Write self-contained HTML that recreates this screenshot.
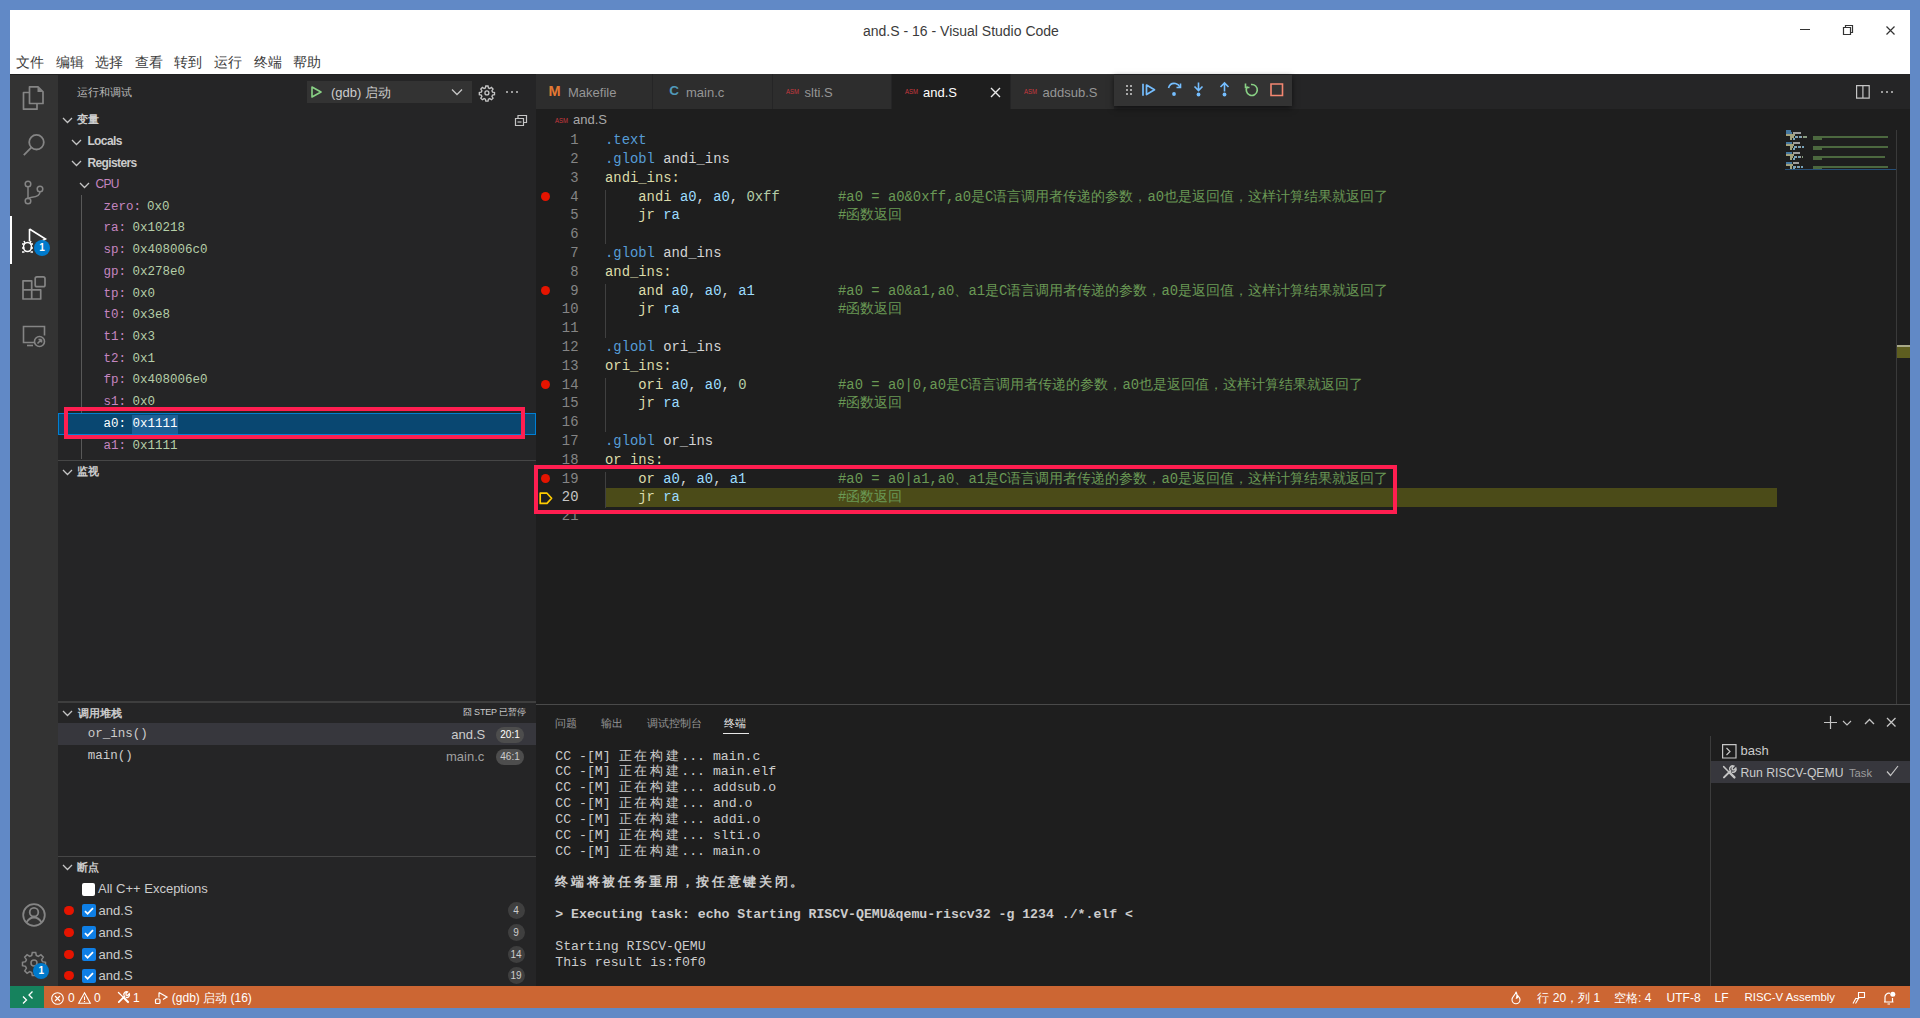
<!DOCTYPE html>
<html><head><meta charset="utf-8">
<style>
*{margin:0;padding:0;box-sizing:border-box}
html,body{width:1920px;height:1018px;overflow:hidden;background:#6189c6;font-family:"Liberation Sans",sans-serif}
.a{position:absolute;white-space:pre}
svg{position:absolute;overflow:visible}
</style></head><body>

<div class="a" style="left:10px;top:10px;width:1900px;height:64px;background:#ffffff;"></div>
<div class="a" style="left:10px;top:74px;width:48px;height:912px;background:#333333;"></div>
<div class="a" style="left:58px;top:74px;width:478px;height:912px;background:#252526;"></div>
<div class="a" style="left:536px;top:74px;width:1374px;height:912px;background:#1e1e1e;"></div>
<div class="a" style="left:10px;top:986px;width:1900px;height:22px;background:#cc6633;"></div>
<div class="a" style="left:10px;top:986px;width:34px;height:22px;background:#16825d;"></div>
<div class="a" style="left:10px;top:74px;width:1900px;height:1px;background:#202020;"></div>
<div class="a" style="left:863.00px;top:23.65px;font-size:14px;line-height:14px;color:#3b3b3b;font-family:'Liberation Sans',sans-serif;">and.S - 16 - Visual Studio Code</div>
<div class="a" style="left:1800px;top:28.7px;width:10px;height:1.3px;background:#333;"></div>
<svg style="left:1842px;top:24px;" width="12" height="12" viewBox="0 0 12 12"><path d="M1.5 3.5h7v7h-7z M3.5 3.5v-2h7v7h-2" fill="none" stroke="#333" stroke-width="1.2"/></svg>
<svg style="left:1886px;top:25.5px;" width="9" height="9" viewBox="0 0 9 9"><path d="M0.5 0.5L8.5 8.5M8.5 0.5L0.5 8.5" stroke="#333" stroke-width="1.2"/></svg>
<div class="a" style="left:16.00px;top:55.87px;font-size:13.5px;line-height:13.5px;color:#3c3c3c;font-family:'Liberation Sans',sans-serif;">文件</div>
<div class="a" style="left:55.60px;top:55.87px;font-size:13.5px;line-height:13.5px;color:#3c3c3c;font-family:'Liberation Sans',sans-serif;">编辑</div>
<div class="a" style="left:95.20px;top:55.87px;font-size:13.5px;line-height:13.5px;color:#3c3c3c;font-family:'Liberation Sans',sans-serif;">选择</div>
<div class="a" style="left:134.80px;top:55.87px;font-size:13.5px;line-height:13.5px;color:#3c3c3c;font-family:'Liberation Sans',sans-serif;">查看</div>
<div class="a" style="left:174.40px;top:55.87px;font-size:13.5px;line-height:13.5px;color:#3c3c3c;font-family:'Liberation Sans',sans-serif;">转到</div>
<div class="a" style="left:214.00px;top:55.87px;font-size:13.5px;line-height:13.5px;color:#3c3c3c;font-family:'Liberation Sans',sans-serif;">运行</div>
<div class="a" style="left:253.60px;top:55.87px;font-size:13.5px;line-height:13.5px;color:#3c3c3c;font-family:'Liberation Sans',sans-serif;">终端</div>
<div class="a" style="left:293.20px;top:55.87px;font-size:13.5px;line-height:13.5px;color:#3c3c3c;font-family:'Liberation Sans',sans-serif;">帮助</div>
<div class="a" style="left:10px;top:216px;width:2px;height:48px;background:#ffffff;"></div>
<svg style="left:22px;top:86px;" width="24" height="24" viewBox="0 0 24 24"><g fill="none" stroke="#858585" stroke-width="1.7" stroke-linejoin="round"><path d="M7.5 0.8h8.5l5 5v11.7h-13.5z"/><path d="M7.5 6.5h-6v16.7h13.5v-5.7"/></g><path d="M15.5 1v5h5z" fill="#858585"/></svg>
<svg style="left:22px;top:133px;" width="24" height="24" viewBox="0 0 24 24"><g fill="none" stroke="#858585" stroke-width="1.8"><circle cx="14.5" cy="9.2" r="7.3"/><path d="M9.2 14.6L1.8 22.2"/></g></svg>
<svg style="left:22px;top:180px;" width="24" height="26" viewBox="0 0 24 26"><g fill="none" stroke="#858585" stroke-width="1.5"><circle cx="6" cy="4" r="2.8"/><circle cx="6" cy="21" r="2.8"/><circle cx="18" cy="9" r="2.8"/><path d="M6 6.8v11.4"/><path d="M18 11.8c0 4-3 5-8 5.5c-2 .3-4 1-4 2"/></g></svg>
<svg style="left:20px;top:227px;" width="28" height="28" viewBox="0 0 28 28"><g fill="none" stroke="#ffffff" stroke-width="1.6"><path d="M9.5 2v12.5M9.5 2l16 10l-6 3.5"/></g><g fill="none" stroke="#ffffff" stroke-width="1.5"><ellipse cx="7.5" cy="20" rx="4" ry="4.5"/><path d="M2 17h2.5M2 21h2.5M2 25h2.5M10.5 17h2.5M10.5 21h2.5M10.5 25h2.5M5 16l-1-2M10 16l1-2"/></g></svg>
<div class="a" style="left:34px;top:239.6px;width:16px;height:16px;border-radius:8px;background:#007acc;color:#fff;font-size:10px;line-height:16px;text-align:center;font-weight:bold">1</div>
<svg style="left:22px;top:276px;" width="24" height="24" viewBox="0 0 24 24"><g fill="none" stroke="#858585" stroke-width="1.7" stroke-linejoin="round"><path d="M1 4.8h8.7v9h9v9.2h-17.7z"/><path d="M1 13.8h8.7v9.2"/><rect x="13.2" y="0.9" width="9.8" height="9.8" rx="1.8"/></g></svg>
<svg style="left:22px;top:324px;" width="24" height="24" viewBox="0 0 24 24"><g fill="none" stroke="#858585" stroke-width="1.6"><path d="M13 18.5h-11.5v-16h21v9"/><path d="M5 21.5h6"/><circle cx="17.5" cy="17.5" r="5"/><path d="M15.5 19.5l4-4M19.5 15.5v3M19.5 15.5h-3"/></g></svg>
<svg style="left:22px;top:903px;" width="24" height="24" viewBox="0 0 24 24"><g fill="none" stroke="#858585" stroke-width="1.8"><circle cx="12" cy="12" r="10.8"/><circle cx="12" cy="9.2" r="4.3"/><path d="M4.5 19.5c2-3.5 4.5-5 7.5-5s5.5 1.5 7.5 5"/></g></svg>
<svg style="left:22px;top:951px;" width="24" height="24" viewBox="0 0 24 24"><g fill="none" stroke="#858585" stroke-width="1.5"><path d="M10.3 1.5h3.4l.6 3 2 .9 2.6-1.7 2.4 2.4-1.7 2.6.9 2 3 .6v3.4l-3 .6-.9 2 1.7 2.6-2.4 2.4-2.6-1.7-2 .9-.6 3h-3.4l-.6-3-2-.9-2.6 1.7-2.4-2.4 1.7-2.6-.9-2-3-.6v-3.4l3-.6.9-2-1.7-2.6 2.4-2.4 2.6 1.7 2-.9z"/><circle cx="12" cy="12" r="3"/></g></svg>
<div class="a" style="left:33.3px;top:962.7px;width:16px;height:16px;border-radius:8px;background:#007acc;color:#fff;font-size:10px;line-height:16px;text-align:center;font-weight:bold">1</div>
<div class="a" style="left:77.40px;top:86.69px;font-size:11px;line-height:11px;color:#bbbbbb;font-family:'Liberation Sans',sans-serif;">运行和调试</div>
<div class="a" style="left:307px;top:81px;width:165px;height:22px;background:#333333;"></div>
<svg style="left:311px;top:86px;" width="11" height="12" viewBox="0 0 11 12"><path d="M1 1L10 6L1 11Z" fill="none" stroke="#89d185" stroke-width="1.6" stroke-linejoin="round"/></svg>
<div class="a" style="left:331.00px;top:85.80px;font-size:13px;line-height:13px;color:#cccccc;font-family:'Liberation Sans',sans-serif;">(gdb) 启动</div>
<svg style="left:451px;top:88px;" width="12" height="8" viewBox="0 0 12 8"><path d="M1 1.5l5 5 5-5" fill="none" stroke="#c5c5c5" stroke-width="1.3"/></svg>
<svg style="left:479px;top:84.5px;" width="16" height="16" viewBox="0 0 16 16"><g transform="scale(0.66)"><g fill="none" stroke="#c5c5c5" stroke-width="2"><path d="M10.3 1.5h3.4l.6 3 2 .9 2.6-1.7 2.4 2.4-1.7 2.6.9 2 3 .6v3.4l-3 .6-.9 2 1.7 2.6-2.4 2.4-2.6-1.7-2 .9-.6 3h-3.4l-.6-3-2-.9-2.6 1.7-2.4-2.4 1.7-2.6-.9-2-3-.6v-3.4l3-.6.9-2-1.7-2.6 2.4-2.4 2.6 1.7 2-.9z"/><circle cx="12" cy="12" r="3"/></g></g></svg>
<div class="a" style="left:506px;top:90.8px;width:2.2px;height:2.2px;background:#c5c5c5;border-radius:1px;"></div>
<div class="a" style="left:511px;top:90.8px;width:2.2px;height:2.2px;background:#c5c5c5;border-radius:1px;"></div>
<div class="a" style="left:516px;top:90.8px;width:2.2px;height:2.2px;background:#c5c5c5;border-radius:1px;"></div>
<svg style="left:62px;top:116.5px;" width="11" height="7" viewBox="0 0 11 7"><path d="M1 1l4.5 4.5L10 1" fill="none" stroke="#c5c5c5" stroke-width="1.3"/></svg>
<div class="a" style="left:77.40px;top:113.99px;font-size:11px;line-height:11px;color:#cccccc;font-family:'Liberation Sans',sans-serif;font-weight:bold;">变量</div>
<svg style="left:514px;top:113px;" width="15" height="14" viewBox="0 0 15 14"><g fill="none" stroke="#c5c5c5" stroke-width="1.2"><path d="M1.5 5.5h8v7h-8z M4 5.5v-3h8.5v7h-3"/><path d="M3.5 9h4"/></g></svg>
<svg style="left:71px;top:138.5px;" width="11" height="7" viewBox="0 0 11 7"><path d="M1 1l4.5 4.5L10 1" fill="none" stroke="#c5c5c5" stroke-width="1.3"/></svg>
<div class="a" style="left:87.40px;top:135.14px;font-size:12px;line-height:12px;color:#cccccc;font-family:'Liberation Sans',sans-serif;font-weight:bold;letter-spacing:-0.6px;">Locals</div>
<svg style="left:71px;top:160.2px;" width="11" height="7" viewBox="0 0 11 7"><path d="M1 1l4.5 4.5L10 1" fill="none" stroke="#c5c5c5" stroke-width="1.3"/></svg>
<div class="a" style="left:87.40px;top:156.84px;font-size:12px;line-height:12px;color:#cccccc;font-family:'Liberation Sans',sans-serif;font-weight:bold;letter-spacing:-0.6px;">Registers</div>
<svg style="left:78.5px;top:181.8px;" width="11" height="7" viewBox="0 0 11 7"><path d="M1 1l4.5 4.5L10 1" fill="none" stroke="#c5c5c5" stroke-width="1.3"/></svg>
<div class="a" style="left:95.50px;top:177.64px;font-size:12px;line-height:12px;color:#c586c0;font-family:'Liberation Sans',sans-serif;letter-spacing:-0.7px;">CPU</div>
<div class="a" style="left:81px;top:195px;width:1px;height:264px;background:#585858;"></div>
<div class="a" style="left:103.60px;top:200.62px;font-size:12.5px;line-height:12.5px;color:#c586c0;font-family:'Liberation Mono',monospace;">zero: </div>
<div class="a" style="left:146.92px;top:200.62px;font-size:12.5px;line-height:12.5px;color:#b5cea8;font-family:'Liberation Mono',monospace;">0x0</div>
<div class="a" style="left:103.60px;top:222.35px;font-size:12.5px;line-height:12.5px;color:#c586c0;font-family:'Liberation Mono',monospace;">ra: </div>
<div class="a" style="left:132.48px;top:222.35px;font-size:12.5px;line-height:12.5px;color:#b5cea8;font-family:'Liberation Mono',monospace;">0x10218</div>
<div class="a" style="left:103.60px;top:244.08px;font-size:12.5px;line-height:12.5px;color:#c586c0;font-family:'Liberation Mono',monospace;">sp: </div>
<div class="a" style="left:132.48px;top:244.08px;font-size:12.5px;line-height:12.5px;color:#b5cea8;font-family:'Liberation Mono',monospace;">0x408006c0</div>
<div class="a" style="left:103.60px;top:265.81px;font-size:12.5px;line-height:12.5px;color:#c586c0;font-family:'Liberation Mono',monospace;">gp: </div>
<div class="a" style="left:132.48px;top:265.81px;font-size:12.5px;line-height:12.5px;color:#b5cea8;font-family:'Liberation Mono',monospace;">0x278e0</div>
<div class="a" style="left:103.60px;top:287.54px;font-size:12.5px;line-height:12.5px;color:#c586c0;font-family:'Liberation Mono',monospace;">tp: </div>
<div class="a" style="left:132.48px;top:287.54px;font-size:12.5px;line-height:12.5px;color:#b5cea8;font-family:'Liberation Mono',monospace;">0x0</div>
<div class="a" style="left:103.60px;top:309.27px;font-size:12.5px;line-height:12.5px;color:#c586c0;font-family:'Liberation Mono',monospace;">t0: </div>
<div class="a" style="left:132.48px;top:309.27px;font-size:12.5px;line-height:12.5px;color:#b5cea8;font-family:'Liberation Mono',monospace;">0x3e8</div>
<div class="a" style="left:103.60px;top:331.00px;font-size:12.5px;line-height:12.5px;color:#c586c0;font-family:'Liberation Mono',monospace;">t1: </div>
<div class="a" style="left:132.48px;top:331.00px;font-size:12.5px;line-height:12.5px;color:#b5cea8;font-family:'Liberation Mono',monospace;">0x3</div>
<div class="a" style="left:103.60px;top:352.73px;font-size:12.5px;line-height:12.5px;color:#c586c0;font-family:'Liberation Mono',monospace;">t2: </div>
<div class="a" style="left:132.48px;top:352.73px;font-size:12.5px;line-height:12.5px;color:#b5cea8;font-family:'Liberation Mono',monospace;">0x1</div>
<div class="a" style="left:103.60px;top:374.46px;font-size:12.5px;line-height:12.5px;color:#c586c0;font-family:'Liberation Mono',monospace;">fp: </div>
<div class="a" style="left:132.48px;top:374.46px;font-size:12.5px;line-height:12.5px;color:#b5cea8;font-family:'Liberation Mono',monospace;">0x408006e0</div>
<div class="a" style="left:103.60px;top:396.19px;font-size:12.5px;line-height:12.5px;color:#c586c0;font-family:'Liberation Mono',monospace;">s1: </div>
<div class="a" style="left:132.48px;top:396.19px;font-size:12.5px;line-height:12.5px;color:#b5cea8;font-family:'Liberation Mono',monospace;">0x0</div>
<div class="a" style="left:58px;top:413px;width:478px;height:22px;background:#094771;border:1px solid #007fd4;"></div>
<div class="a" style="left:132px;top:414.5px;width:45.5px;height:19px;background:#1d5f94;"></div>
<div class="a" style="left:103.60px;top:417.92px;font-size:12.5px;line-height:12.5px;color:#ffffff;font-family:'Liberation Mono',monospace;">a0: </div>
<div class="a" style="left:132.50px;top:417.92px;font-size:12.5px;line-height:12.5px;color:#ffffff;font-family:'Liberation Mono',monospace;">0x1111</div>
<div class="a" style="left:103.60px;top:439.65px;font-size:12.5px;line-height:12.5px;color:#c586c0;font-family:'Liberation Mono',monospace;">a1: </div>
<div class="a" style="left:132.48px;top:439.65px;font-size:12.5px;line-height:12.5px;color:#b5cea8;font-family:'Liberation Mono',monospace;">0x1111</div>
<div class="a" style="left:58px;top:460px;width:478px;height:1px;background:#464646;"></div>
<svg style="left:62px;top:468.5px;" width="11" height="7" viewBox="0 0 11 7"><path d="M1 1l4.5 4.5L10 1" fill="none" stroke="#c5c5c5" stroke-width="1.3"/></svg>
<div class="a" style="left:77.40px;top:466.19px;font-size:11px;line-height:11px;color:#cccccc;font-family:'Liberation Sans',sans-serif;font-weight:bold;">监视</div>
<div class="a" style="left:58px;top:701px;width:478px;height:2px;background:#3e3e3e;"></div>
<svg style="left:62px;top:709.5px;" width="11" height="7" viewBox="0 0 11 7"><path d="M1 1l4.5 4.5L10 1" fill="none" stroke="#c5c5c5" stroke-width="1.3"/></svg>
<div class="a" style="left:77.80px;top:708.19px;font-size:11px;line-height:11px;color:#cccccc;font-family:'Liberation Sans',sans-serif;font-weight:bold;">调用堆栈</div>
<div class="a" style="left:463.00px;top:708.38px;font-size:9px;line-height:9px;color:#cccccc;font-family:'Liberation Sans',sans-serif;letter-spacing:-0.2px;">囧 STEP 已暂停</div>
<div class="a" style="left:58px;top:723px;width:478px;height:21.7px;background:#37373d;"></div>
<div class="a" style="left:87.70px;top:727.72px;font-size:12.5px;line-height:12.5px;color:#cccccc;font-family:'Liberation Mono',monospace;">or_ins()</div>
<div class="a" style="left:451.30px;top:727.80px;font-size:13px;line-height:13px;color:#cccccc;font-family:'Liberation Sans',sans-serif;">and.S</div>
<div class="a" style="left:496px;top:726.5px;width:28px;height:16px;border-radius:8px;background:#4d4d4d;color:#ffffff;font-size:10px;line-height:16px;text-align:center">20:1</div>
<div class="a" style="left:87.70px;top:749.52px;font-size:12.5px;line-height:12.5px;color:#cccccc;font-family:'Liberation Mono',monospace;">main()</div>
<div class="a" style="left:446.00px;top:749.50px;font-size:13px;line-height:13px;color:#a0a0a0;font-family:'Liberation Sans',sans-serif;">main.c</div>
<div class="a" style="left:496px;top:748.5px;width:28px;height:16px;border-radius:8px;background:#4d4d4d;color:#cccccc;font-size:10px;line-height:16px;text-align:center">46:1</div>
<div class="a" style="left:58px;top:856px;width:478px;height:1px;background:#464646;"></div>
<svg style="left:62px;top:864px;" width="11" height="7" viewBox="0 0 11 7"><path d="M1 1l4.5 4.5L10 1" fill="none" stroke="#c5c5c5" stroke-width="1.3"/></svg>
<div class="a" style="left:77.30px;top:862.19px;font-size:11px;line-height:11px;color:#cccccc;font-family:'Liberation Sans',sans-serif;font-weight:bold;">断点</div>
<div class="a" style="left:82px;top:883px;width:13px;height:12.5px;background:#ffffff;border-radius:2px;"></div>
<div class="a" style="left:98.00px;top:882.30px;font-size:13px;line-height:13px;color:#cccccc;font-family:'Liberation Sans',sans-serif;">All C++ Exceptions</div>
<div class="a" style="left:64.4px;top:905.9px;width:9.2px;height:9.2px;border-radius:5px;background:#e51400"></div>
<div class="a" style="left:82px;top:904.0px;width:13.5px;height:13.3px;background:#0e7fe6;border-radius:2px;"></div>
<svg style="left:82px;top:904.0px;" width="14" height="14" viewBox="0 0 14 14"><path d="M3 7.2l2.6 2.6L11 4.2" fill="none" stroke="#ffffff" stroke-width="1.8"/></svg>
<div class="a" style="left:98.60px;top:903.60px;font-size:13px;line-height:13px;color:#cccccc;font-family:'Liberation Sans',sans-serif;">and.S</div>
<div class="a" style="left:507.5px;top:902.0px;width:17px;height:17px;border-radius:9px;background:#3f3f3f;color:#cccccc;font-size:10px;line-height:17px;text-align:center">4</div>
<div class="a" style="left:64.4px;top:927.7px;width:9.2px;height:9.2px;border-radius:5px;background:#e51400"></div>
<div class="a" style="left:82px;top:925.8px;width:13.5px;height:13.3px;background:#0e7fe6;border-radius:2px;"></div>
<svg style="left:82px;top:925.8px;" width="14" height="14" viewBox="0 0 14 14"><path d="M3 7.2l2.6 2.6L11 4.2" fill="none" stroke="#ffffff" stroke-width="1.8"/></svg>
<div class="a" style="left:98.60px;top:925.70px;font-size:13px;line-height:13px;color:#cccccc;font-family:'Liberation Sans',sans-serif;">and.S</div>
<div class="a" style="left:507.5px;top:923.8px;width:17px;height:17px;border-radius:9px;background:#3f3f3f;color:#cccccc;font-size:10px;line-height:17px;text-align:center">9</div>
<div class="a" style="left:64.4px;top:949.6px;width:9.2px;height:9.2px;border-radius:5px;background:#e51400"></div>
<div class="a" style="left:82px;top:947.7px;width:13.5px;height:13.3px;background:#0e7fe6;border-radius:2px;"></div>
<svg style="left:82px;top:947.7px;" width="14" height="14" viewBox="0 0 14 14"><path d="M3 7.2l2.6 2.6L11 4.2" fill="none" stroke="#ffffff" stroke-width="1.8"/></svg>
<div class="a" style="left:98.60px;top:947.70px;font-size:13px;line-height:13px;color:#cccccc;font-family:'Liberation Sans',sans-serif;">and.S</div>
<div class="a" style="left:507.5px;top:945.7px;width:17px;height:17px;border-radius:9px;background:#3f3f3f;color:#cccccc;font-size:10px;line-height:17px;text-align:center">14</div>
<div class="a" style="left:64.4px;top:971.2px;width:9.2px;height:9.2px;border-radius:5px;background:#e51400"></div>
<div class="a" style="left:82px;top:969.3px;width:13.5px;height:13.3px;background:#0e7fe6;border-radius:2px;"></div>
<svg style="left:82px;top:969.3px;" width="14" height="14" viewBox="0 0 14 14"><path d="M3 7.2l2.6 2.6L11 4.2" fill="none" stroke="#ffffff" stroke-width="1.8"/></svg>
<div class="a" style="left:98.60px;top:969.00px;font-size:13px;line-height:13px;color:#cccccc;font-family:'Liberation Sans',sans-serif;">and.S</div>
<div class="a" style="left:507.5px;top:967.3px;width:17px;height:17px;border-radius:9px;background:#3f3f3f;color:#cccccc;font-size:10px;line-height:17px;text-align:center">19</div>
<div class="a" style="left:536px;top:74px;width:1374px;height:35px;background:#252526;"></div>
<div class="a" style="left:536px;top:74px;width:116px;height:35px;background:#2d2d2d;"></div>
<div class="a" style="left:653px;top:74px;width:119px;height:35px;background:#2d2d2d;"></div>
<div class="a" style="left:773px;top:74px;width:118px;height:35px;background:#2d2d2d;"></div>
<div class="a" style="left:892px;top:74px;width:118px;height:35px;background:#1e1e1e;"></div>
<div class="a" style="left:1011px;top:74px;width:103px;height:35px;background:#2d2d2d;"></div>
<div class="a" style="left:548.50px;top:83.73px;font-size:14.5px;line-height:14.5px;color:#e37933;font-family:'Liberation Sans',sans-serif;font-weight:bold;">M</div>
<div class="a" style="left:568.00px;top:85.50px;font-size:13px;line-height:13px;color:#969696;font-family:'Liberation Sans',sans-serif;">Makefile</div>
<div class="a" style="left:669.20px;top:83.77px;font-size:13.5px;line-height:13.5px;color:#519aba;font-family:'Liberation Sans',sans-serif;font-weight:bold;">C</div>
<div class="a" style="left:686.00px;top:85.50px;font-size:13px;line-height:13px;color:#969696;font-family:'Liberation Sans',sans-serif;">main.c</div>
<svg style="left:786px;top:88px;" width="14" height="6" viewBox="0 0 14 6"><text x="0" y="5.5" font-family="Liberation Sans" font-size="6.5" fill="#c8393f" textLength="13" lengthAdjust="spacingAndGlyphs">ASM</text></svg>
<div class="a" style="left:804.50px;top:85.50px;font-size:13px;line-height:13px;color:#969696;font-family:'Liberation Sans',sans-serif;">slti.S</div>
<svg style="left:905px;top:88px;" width="14" height="6" viewBox="0 0 14 6"><text x="0" y="5.5" font-family="Liberation Sans" font-size="6.5" fill="#c8393f" textLength="13" lengthAdjust="spacingAndGlyphs">ASM</text></svg>
<div class="a" style="left:923.00px;top:85.50px;font-size:13px;line-height:13px;color:#ffffff;font-family:'Liberation Sans',sans-serif;">and.S</div>
<svg style="left:990px;top:86.5px;" width="11" height="11" viewBox="0 0 11 11"><path d="M1 1l9 9M10 1l-9 9" stroke="#e8e8e8" stroke-width="1.4"/></svg>
<svg style="left:1024px;top:88px;" width="14" height="6" viewBox="0 0 14 6"><text x="0" y="5.5" font-family="Liberation Sans" font-size="6.5" fill="#c8393f" textLength="13" lengthAdjust="spacingAndGlyphs">ASM</text></svg>
<div class="a" style="left:1042.50px;top:85.50px;font-size:13px;line-height:13px;color:#969696;font-family:'Liberation Sans',sans-serif;">addsub.S</div>
<div class="a" style="left:1114px;top:75px;width:178px;height:31px;background:#333333;box-shadow:0 2px 6px rgba(0,0,0,0.6);"></div>
<div class="a" style="left:1126px;top:84.8px;width:2px;height:2px;background:#a8a8a8;"></div>
<div class="a" style="left:1126px;top:88.8px;width:2px;height:2px;background:#a8a8a8;"></div>
<div class="a" style="left:1126px;top:92.8px;width:2px;height:2px;background:#a8a8a8;"></div>
<div class="a" style="left:1130px;top:84.8px;width:2px;height:2px;background:#a8a8a8;"></div>
<div class="a" style="left:1130px;top:88.8px;width:2px;height:2px;background:#a8a8a8;"></div>
<div class="a" style="left:1130px;top:92.8px;width:2px;height:2px;background:#a8a8a8;"></div>
<svg style="left:1141px;top:83px;" width="16" height="14" viewBox="0 0 16 14"><g fill="none" stroke="#75beff" stroke-width="1.7"><path d="M2 0.8v12"/><path d="M5.5 2l8 4.8-8 4.8z" stroke-linejoin="round"/></g></svg>
<svg style="left:1167px;top:82px;" width="15" height="15" viewBox="0 0 15 15"><g fill="none" stroke="#75beff" stroke-width="1.6"><path d="M1.5 6c1-3.5 4-5 7-4.5 2 .4 3.5 1.7 4.3 3.3"/><path d="M13.5 1.5v4h-4"/></g><circle cx="7" cy="12" r="1.9" fill="#75beff"/></svg>
<svg style="left:1192px;top:82px;" width="13" height="15" viewBox="0 0 13 15"><g fill="none" stroke="#75beff" stroke-width="1.6"><path d="M6.5 0.5v7.5M2.5 4.5l4 4 4-4"/></g><circle cx="6.5" cy="12.5" r="1.9" fill="#75beff"/></svg>
<svg style="left:1218px;top:82px;" width="13" height="15" viewBox="0 0 13 15"><g fill="none" stroke="#75beff" stroke-width="1.6"><path d="M6.5 9.5v-8.5M2.5 5l4-4 4 4"/></g><circle cx="6.5" cy="12.5" r="1.9" fill="#75beff"/></svg>
<svg style="left:1244px;top:82px;" width="14" height="15" viewBox="0 0 14 15"><g fill="none" stroke="#89d185" stroke-width="1.6"><path d="M3.5 4.5a5.5 5.5 0 1 0 3.5-2"/><path d="M1.5 1.5v4h4"/></g></svg>
<svg style="left:1270px;top:83px;" width="14" height="14" viewBox="0 0 14 14"><path d="M1 1h11.5v11.5h-11.5z" fill="none" stroke="#f48771" stroke-width="1.6"/></svg>
<svg style="left:1855.5px;top:84.5px;" width="14" height="14" viewBox="0 0 14 14"><g fill="none" stroke="#c5c5c5" stroke-width="1.2"><path d="M0.6 0.6h12.6v12.6h-12.6zM6.9 0.6v12.6"/></g></svg>
<div class="a" style="left:1881px;top:90.8px;width:2.2px;height:2.2px;background:#c5c5c5;border-radius:1px;"></div>
<div class="a" style="left:1886px;top:90.8px;width:2.2px;height:2.2px;background:#c5c5c5;border-radius:1px;"></div>
<div class="a" style="left:1891px;top:90.8px;width:2.2px;height:2.2px;background:#c5c5c5;border-radius:1px;"></div>
<svg style="left:555px;top:117px;" width="14" height="6" viewBox="0 0 14 6"><text x="0" y="5.5" font-family="Liberation Sans" font-size="6.5" fill="#c8393f" textLength="13" lengthAdjust="spacingAndGlyphs">ASM</text></svg>
<div class="a" style="left:573.00px;top:112.90px;font-size:13px;line-height:13px;color:#a9a9a9;font-family:'Liberation Sans',sans-serif;">and.S</div>
<div class="a" style="left:605px;top:488px;width:1172px;height:18.5px;background:#4b4b18;"></div>
<div class="a" style="left:605px;top:190.1px;width:1px;height:54.400000000000006px;background:#404040;"></div>
<div class="a" style="left:605px;top:284.1px;width:1px;height:54.400000000000006px;background:#404040;"></div>
<div class="a" style="left:605px;top:378.1px;width:1px;height:54.400000000000006px;background:#404040;"></div>
<div class="a" style="left:605px;top:472.1px;width:1px;height:35.6px;background:#404040;"></div>
<div class="a" style="left:605px;top:134.12px;font-family:'Liberation Mono',monospace;font-size:13.87px;line-height:13.87px;"><span style="color:#569cd6">.text</span></div>
<div class="a" style="left:605px;top:152.92px;font-family:'Liberation Mono',monospace;font-size:13.87px;line-height:13.87px;"><span style="color:#569cd6">.globl</span><span style="color:#d4d4d4"> andi_ins</span></div>
<div class="a" style="left:605px;top:171.72px;font-family:'Liberation Mono',monospace;font-size:13.87px;line-height:13.87px;"><span style="color:#dcdcaa">andi_ins:</span></div>
<div class="a" style="left:605px;top:190.52px;font-family:'Liberation Mono',monospace;font-size:13.87px;line-height:13.87px;"><span style="color:#dcdcaa">    andi</span><span style="color:#d4d4d4"> </span><span style="color:#9cdcfe">a0</span><span style="color:#d4d4d4">, </span><span style="color:#9cdcfe">a0</span><span style="color:#d4d4d4">, </span><span style="color:#b5cea8">0xff</span></div>
<div class="a" style="left:605px;top:209.32px;font-family:'Liberation Mono',monospace;font-size:13.87px;line-height:13.87px;"><span style="color:#dcdcaa">    jr</span><span style="color:#d4d4d4"> </span><span style="color:#9cdcfe">ra</span></div>
<div class="a" style="left:605px;top:246.92px;font-family:'Liberation Mono',monospace;font-size:13.87px;line-height:13.87px;"><span style="color:#569cd6">.globl</span><span style="color:#d4d4d4"> and_ins</span></div>
<div class="a" style="left:605px;top:265.72px;font-family:'Liberation Mono',monospace;font-size:13.87px;line-height:13.87px;"><span style="color:#dcdcaa">and_ins:</span></div>
<div class="a" style="left:605px;top:284.52px;font-family:'Liberation Mono',monospace;font-size:13.87px;line-height:13.87px;"><span style="color:#dcdcaa">    and</span><span style="color:#d4d4d4"> </span><span style="color:#9cdcfe">a0</span><span style="color:#d4d4d4">, </span><span style="color:#9cdcfe">a0</span><span style="color:#d4d4d4">, </span><span style="color:#9cdcfe">a1</span></div>
<div class="a" style="left:605px;top:303.32px;font-family:'Liberation Mono',monospace;font-size:13.87px;line-height:13.87px;"><span style="color:#dcdcaa">    jr</span><span style="color:#d4d4d4"> </span><span style="color:#9cdcfe">ra</span></div>
<div class="a" style="left:605px;top:340.92px;font-family:'Liberation Mono',monospace;font-size:13.87px;line-height:13.87px;"><span style="color:#569cd6">.globl</span><span style="color:#d4d4d4"> ori_ins</span></div>
<div class="a" style="left:605px;top:359.72px;font-family:'Liberation Mono',monospace;font-size:13.87px;line-height:13.87px;"><span style="color:#dcdcaa">ori_ins:</span></div>
<div class="a" style="left:605px;top:378.52px;font-family:'Liberation Mono',monospace;font-size:13.87px;line-height:13.87px;"><span style="color:#dcdcaa">    ori</span><span style="color:#d4d4d4"> </span><span style="color:#9cdcfe">a0</span><span style="color:#d4d4d4">, </span><span style="color:#9cdcfe">a0</span><span style="color:#d4d4d4">, </span><span style="color:#b5cea8">0</span></div>
<div class="a" style="left:605px;top:397.32px;font-family:'Liberation Mono',monospace;font-size:13.87px;line-height:13.87px;"><span style="color:#dcdcaa">    jr</span><span style="color:#d4d4d4"> </span><span style="color:#9cdcfe">ra</span></div>
<div class="a" style="left:605px;top:434.92px;font-family:'Liberation Mono',monospace;font-size:13.87px;line-height:13.87px;"><span style="color:#569cd6">.globl</span><span style="color:#d4d4d4"> or_ins</span></div>
<div class="a" style="left:605px;top:453.72px;font-family:'Liberation Mono',monospace;font-size:13.87px;line-height:13.87px;"><span style="color:#dcdcaa">or_ins:</span></div>
<div class="a" style="left:605px;top:472.52px;font-family:'Liberation Mono',monospace;font-size:13.87px;line-height:13.87px;"><span style="color:#dcdcaa">    or</span><span style="color:#d4d4d4"> </span><span style="color:#9cdcfe">a0</span><span style="color:#d4d4d4">, </span><span style="color:#9cdcfe">a0</span><span style="color:#d4d4d4">, </span><span style="color:#9cdcfe">a1</span></div>
<div class="a" style="left:605px;top:491.32px;font-family:'Liberation Mono',monospace;font-size:13.87px;line-height:13.87px;"><span style="color:#dcdcaa">    jr</span><span style="color:#d4d4d4"> </span><span style="color:#9cdcfe">ra</span></div>
<div class="a" style="left:838px;top:190.52px;font-family:'Liberation Mono',monospace;font-size:13.87px;line-height:13.87px;color:#6a9955">#a0 = a0&amp;0xff,a0<span style="letter-spacing:0px">是</span>C<span style="letter-spacing:0px">语言调用者传递的参数，</span>a0<span style="letter-spacing:0px">也是返回值，这样计算结果就返回了</span></div>
<div class="a" style="left:838px;top:209.32px;font-family:'Liberation Mono',monospace;font-size:13.87px;line-height:13.87px;color:#6a9955">#<span style="letter-spacing:0px">函数返回</span></div>
<div class="a" style="left:838px;top:284.52px;font-family:'Liberation Mono',monospace;font-size:13.87px;line-height:13.87px;color:#6a9955">#a0 = a0&amp;a1,a0<span style="letter-spacing:0px">、</span>a1<span style="letter-spacing:0px">是</span>C<span style="letter-spacing:0px">语言调用者传递的参数，</span>a0<span style="letter-spacing:0px">是返回值，这样计算结果就返回了</span></div>
<div class="a" style="left:838px;top:303.32px;font-family:'Liberation Mono',monospace;font-size:13.87px;line-height:13.87px;color:#6a9955">#<span style="letter-spacing:0px">函数返回</span></div>
<div class="a" style="left:838px;top:378.52px;font-family:'Liberation Mono',monospace;font-size:13.87px;line-height:13.87px;color:#6a9955">#a0 = a0|0,a0<span style="letter-spacing:0px">是</span>C<span style="letter-spacing:0px">语言调用者传递的参数，</span>a0<span style="letter-spacing:0px">也是返回值，这样计算结果就返回了</span></div>
<div class="a" style="left:838px;top:397.32px;font-family:'Liberation Mono',monospace;font-size:13.87px;line-height:13.87px;color:#6a9955">#<span style="letter-spacing:0px">函数返回</span></div>
<div class="a" style="left:838px;top:472.52px;font-family:'Liberation Mono',monospace;font-size:13.87px;line-height:13.87px;color:#6a9955">#a0 = a0|a1,a0<span style="letter-spacing:0px">、</span>a1<span style="letter-spacing:0px">是</span>C<span style="letter-spacing:0px">语言调用者传递的参数，</span>a0<span style="letter-spacing:0px">是返回值，这样计算结果就返回了</span></div>
<div class="a" style="left:838px;top:491.32px;font-family:'Liberation Mono',monospace;font-size:13.87px;line-height:13.87px;color:#6a9955">#<span style="letter-spacing:0px">函数返回</span></div>
<div class="a" style="right:1341.50px;top:134.12px;font-size:13.87px;line-height:13.87px;color:#858585;font-family:'Liberation Mono',monospace;">1</div>
<div class="a" style="right:1341.50px;top:152.92px;font-size:13.87px;line-height:13.87px;color:#858585;font-family:'Liberation Mono',monospace;">2</div>
<div class="a" style="right:1341.50px;top:171.72px;font-size:13.87px;line-height:13.87px;color:#858585;font-family:'Liberation Mono',monospace;">3</div>
<div class="a" style="right:1341.50px;top:190.52px;font-size:13.87px;line-height:13.87px;color:#858585;font-family:'Liberation Mono',monospace;">4</div>
<div class="a" style="right:1341.50px;top:209.32px;font-size:13.87px;line-height:13.87px;color:#858585;font-family:'Liberation Mono',monospace;">5</div>
<div class="a" style="right:1341.50px;top:228.12px;font-size:13.87px;line-height:13.87px;color:#858585;font-family:'Liberation Mono',monospace;">6</div>
<div class="a" style="right:1341.50px;top:246.92px;font-size:13.87px;line-height:13.87px;color:#858585;font-family:'Liberation Mono',monospace;">7</div>
<div class="a" style="right:1341.50px;top:265.72px;font-size:13.87px;line-height:13.87px;color:#858585;font-family:'Liberation Mono',monospace;">8</div>
<div class="a" style="right:1341.50px;top:284.52px;font-size:13.87px;line-height:13.87px;color:#858585;font-family:'Liberation Mono',monospace;">9</div>
<div class="a" style="right:1341.50px;top:303.32px;font-size:13.87px;line-height:13.87px;color:#858585;font-family:'Liberation Mono',monospace;">10</div>
<div class="a" style="right:1341.50px;top:322.12px;font-size:13.87px;line-height:13.87px;color:#858585;font-family:'Liberation Mono',monospace;">11</div>
<div class="a" style="right:1341.50px;top:340.92px;font-size:13.87px;line-height:13.87px;color:#858585;font-family:'Liberation Mono',monospace;">12</div>
<div class="a" style="right:1341.50px;top:359.72px;font-size:13.87px;line-height:13.87px;color:#858585;font-family:'Liberation Mono',monospace;">13</div>
<div class="a" style="right:1341.50px;top:378.52px;font-size:13.87px;line-height:13.87px;color:#858585;font-family:'Liberation Mono',monospace;">14</div>
<div class="a" style="right:1341.50px;top:397.32px;font-size:13.87px;line-height:13.87px;color:#858585;font-family:'Liberation Mono',monospace;">15</div>
<div class="a" style="right:1341.50px;top:416.12px;font-size:13.87px;line-height:13.87px;color:#858585;font-family:'Liberation Mono',monospace;">16</div>
<div class="a" style="right:1341.50px;top:434.92px;font-size:13.87px;line-height:13.87px;color:#858585;font-family:'Liberation Mono',monospace;">17</div>
<div class="a" style="right:1341.50px;top:453.72px;font-size:13.87px;line-height:13.87px;color:#858585;font-family:'Liberation Mono',monospace;">18</div>
<div class="a" style="right:1341.50px;top:472.52px;font-size:13.87px;line-height:13.87px;color:#858585;font-family:'Liberation Mono',monospace;">19</div>
<div class="a" style="right:1341.50px;top:491.32px;font-size:13.87px;line-height:13.87px;color:#c6c6c6;font-family:'Liberation Mono',monospace;">20</div>
<div class="a" style="right:1341.50px;top:510.12px;font-size:13.87px;line-height:13.87px;color:#858585;font-family:'Liberation Mono',monospace;">21</div>
<div class="a" style="left:540.8px;top:191.65px;width:9.2px;height:9.2px;border-radius:5px;background:#e51400"></div>
<div class="a" style="left:540.8px;top:285.65px;width:9.2px;height:9.2px;border-radius:5px;background:#e51400"></div>
<div class="a" style="left:540.8px;top:379.65px;width:9.2px;height:9.2px;border-radius:5px;background:#e51400"></div>
<div class="a" style="left:540.8px;top:473.65px;width:9.2px;height:9.2px;border-radius:5px;background:#e51400"></div>
<svg style="left:539px;top:491.5px;" width="14" height="13" viewBox="0 0 14 13"><path d="M1.2 1.2h6.8l4.6 5.1-4.6 5.1h-6.8z" fill="none" stroke="#ffcc00" stroke-width="1.7" stroke-linejoin="round"/></svg>
<div class="a" style="left:1786px;top:129.7px;width:5px;height:2.2px;background:#569cd6;opacity:0.7;"></div>
<div class="a" style="left:1786px;top:131.7px;width:6px;height:2.2px;background:#569cd6;opacity:0.7;"></div>
<div class="a" style="left:1793px;top:131.7px;width:8px;height:2.2px;background:#d4d4d4;opacity:0.7;"></div>
<div class="a" style="left:1786px;top:133.7px;width:9px;height:2.2px;background:#dcdcaa;opacity:0.7;"></div>
<div class="a" style="left:1790px;top:135.7px;width:4px;height:2.2px;background:#dcdcaa;opacity:0.7;"></div>
<div class="a" style="left:1795px;top:135.7px;width:2px;height:2.2px;background:#9cdcfe;opacity:0.7;"></div>
<div class="a" style="left:1797px;top:135.7px;width:1px;height:2.2px;background:#d4d4d4;opacity:0.7;"></div>
<div class="a" style="left:1799px;top:135.7px;width:2px;height:2.2px;background:#9cdcfe;opacity:0.7;"></div>
<div class="a" style="left:1801px;top:135.7px;width:1px;height:2.2px;background:#d4d4d4;opacity:0.7;"></div>
<div class="a" style="left:1803px;top:135.7px;width:4px;height:2.2px;background:#b5cea8;opacity:0.7;"></div>
<div class="a" style="left:1790px;top:137.7px;width:2px;height:2.2px;background:#dcdcaa;opacity:0.7;"></div>
<div class="a" style="left:1793px;top:137.7px;width:2px;height:2.2px;background:#9cdcfe;opacity:0.7;"></div>
<div class="a" style="left:1786px;top:141.7px;width:6px;height:2.2px;background:#569cd6;opacity:0.7;"></div>
<div class="a" style="left:1793px;top:141.7px;width:7px;height:2.2px;background:#d4d4d4;opacity:0.7;"></div>
<div class="a" style="left:1786px;top:143.7px;width:8px;height:2.2px;background:#dcdcaa;opacity:0.7;"></div>
<div class="a" style="left:1790px;top:145.7px;width:3px;height:2.2px;background:#dcdcaa;opacity:0.7;"></div>
<div class="a" style="left:1794px;top:145.7px;width:2px;height:2.2px;background:#9cdcfe;opacity:0.7;"></div>
<div class="a" style="left:1796px;top:145.7px;width:1px;height:2.2px;background:#d4d4d4;opacity:0.7;"></div>
<div class="a" style="left:1798px;top:145.7px;width:2px;height:2.2px;background:#9cdcfe;opacity:0.7;"></div>
<div class="a" style="left:1800px;top:145.7px;width:1px;height:2.2px;background:#d4d4d4;opacity:0.7;"></div>
<div class="a" style="left:1802px;top:145.7px;width:2px;height:2.2px;background:#9cdcfe;opacity:0.7;"></div>
<div class="a" style="left:1790px;top:147.7px;width:2px;height:2.2px;background:#dcdcaa;opacity:0.7;"></div>
<div class="a" style="left:1793px;top:147.7px;width:2px;height:2.2px;background:#9cdcfe;opacity:0.7;"></div>
<div class="a" style="left:1786px;top:151.7px;width:6px;height:2.2px;background:#569cd6;opacity:0.7;"></div>
<div class="a" style="left:1793px;top:151.7px;width:7px;height:2.2px;background:#d4d4d4;opacity:0.7;"></div>
<div class="a" style="left:1786px;top:153.7px;width:8px;height:2.2px;background:#dcdcaa;opacity:0.7;"></div>
<div class="a" style="left:1790px;top:155.7px;width:3px;height:2.2px;background:#dcdcaa;opacity:0.7;"></div>
<div class="a" style="left:1794px;top:155.7px;width:2px;height:2.2px;background:#9cdcfe;opacity:0.7;"></div>
<div class="a" style="left:1796px;top:155.7px;width:1px;height:2.2px;background:#d4d4d4;opacity:0.7;"></div>
<div class="a" style="left:1798px;top:155.7px;width:2px;height:2.2px;background:#9cdcfe;opacity:0.7;"></div>
<div class="a" style="left:1800px;top:155.7px;width:1px;height:2.2px;background:#d4d4d4;opacity:0.7;"></div>
<div class="a" style="left:1802px;top:155.7px;width:1px;height:2.2px;background:#b5cea8;opacity:0.7;"></div>
<div class="a" style="left:1790px;top:157.7px;width:2px;height:2.2px;background:#dcdcaa;opacity:0.7;"></div>
<div class="a" style="left:1793px;top:157.7px;width:2px;height:2.2px;background:#9cdcfe;opacity:0.7;"></div>
<div class="a" style="left:1786px;top:161.7px;width:6px;height:2.2px;background:#569cd6;opacity:0.7;"></div>
<div class="a" style="left:1793px;top:161.7px;width:6px;height:2.2px;background:#d4d4d4;opacity:0.7;"></div>
<div class="a" style="left:1786px;top:163.7px;width:7px;height:2.2px;background:#dcdcaa;opacity:0.7;"></div>
<div class="a" style="left:1790px;top:165.7px;width:2px;height:2.2px;background:#dcdcaa;opacity:0.7;"></div>
<div class="a" style="left:1793px;top:165.7px;width:2px;height:2.2px;background:#9cdcfe;opacity:0.7;"></div>
<div class="a" style="left:1795px;top:165.7px;width:1px;height:2.2px;background:#d4d4d4;opacity:0.7;"></div>
<div class="a" style="left:1797px;top:165.7px;width:2px;height:2.2px;background:#9cdcfe;opacity:0.7;"></div>
<div class="a" style="left:1799px;top:165.7px;width:1px;height:2.2px;background:#d4d4d4;opacity:0.7;"></div>
<div class="a" style="left:1801px;top:165.7px;width:2px;height:2.2px;background:#9cdcfe;opacity:0.7;"></div>
<div class="a" style="left:1790px;top:167.7px;width:2px;height:2.2px;background:#dcdcaa;opacity:0.7;"></div>
<div class="a" style="left:1793px;top:167.7px;width:2px;height:2.2px;background:#9cdcfe;opacity:0.7;"></div>
<div class="a" style="left:1813px;top:135.8px;width:75px;height:2.2px;background:#6a9955;opacity:0.6;"></div>
<div class="a" style="left:1813px;top:137.8px;width:9px;height:2.2px;background:#6a9955;opacity:0.6;"></div>
<div class="a" style="left:1813px;top:145.8px;width:75px;height:2.2px;background:#6a9955;opacity:0.6;"></div>
<div class="a" style="left:1813px;top:147.8px;width:9px;height:2.2px;background:#6a9955;opacity:0.6;"></div>
<div class="a" style="left:1813px;top:155.8px;width:72px;height:2.2px;background:#6a9955;opacity:0.6;"></div>
<div class="a" style="left:1813px;top:157.8px;width:9px;height:2.2px;background:#6a9955;opacity:0.6;"></div>
<div class="a" style="left:1813px;top:165.8px;width:75px;height:2.2px;background:#6a9955;opacity:0.6;"></div>
<div class="a" style="left:1813px;top:167.8px;width:9px;height:2.2px;background:#6a9955;opacity:0.6;"></div>
<div class="a" style="left:1785px;top:168.5px;width:111px;height:1.5px;background:#264f78;"></div>
<div class="a" style="left:1896px;top:130px;width:1px;height:574px;background:#3a3a3a;"></div>
<div class="a" style="left:1897px;top:345px;width:13px;height:1.5px;background:#a8a888;"></div>
<div class="a" style="left:1897px;top:346.5px;width:13px;height:11.5px;background:#5e5e20;"></div>
<div class="a" style="left:63.8px;top:407px;width:461px;height:31.5px;border:4.8px solid #ff1e50"></div>
<div class="a" style="left:534.2px;top:464.5px;width:862.8px;height:49.5px;border:4.9px solid #ff1e50"></div>
<div class="a" style="left:536px;top:704px;width:1374px;height:1px;background:#4a4a4a;"></div>
<div class="a" style="left:536px;top:705px;width:1374px;height:281px;background:#1e1e1e;"></div>
<div class="a" style="left:555.30px;top:717.69px;font-size:11px;line-height:11px;color:#969696;font-family:'Liberation Sans',sans-serif;">问题</div>
<div class="a" style="left:600.70px;top:717.69px;font-size:11px;line-height:11px;color:#969696;font-family:'Liberation Sans',sans-serif;">输出</div>
<div class="a" style="left:647.40px;top:717.69px;font-size:11px;line-height:11px;color:#969696;font-family:'Liberation Sans',sans-serif;">调试控制台</div>
<div class="a" style="left:724.00px;top:717.69px;font-size:11px;line-height:11px;color:#e7e7e7;font-family:'Liberation Sans',sans-serif;">终端</div>
<div class="a" style="left:722.5px;top:733px;width:26px;height:1px;background:#e7e7e7;"></div>
<div class="a" style="left:555.3px;top:749.58px;font-family:'Liberation Mono',monospace;font-size:13.2px;line-height:13.2px;color:#cccccc;">CC -[M] <span style="letter-spacing:2.66px">正在构建</span>... main.c</div>
<div class="a" style="left:555.3px;top:765.43px;font-family:'Liberation Mono',monospace;font-size:13.2px;line-height:13.2px;color:#cccccc;">CC -[M] <span style="letter-spacing:2.66px">正在构建</span>... main.elf</div>
<div class="a" style="left:555.3px;top:781.28px;font-family:'Liberation Mono',monospace;font-size:13.2px;line-height:13.2px;color:#cccccc;">CC -[M] <span style="letter-spacing:2.66px">正在构建</span>... addsub.o</div>
<div class="a" style="left:555.3px;top:797.13px;font-family:'Liberation Mono',monospace;font-size:13.2px;line-height:13.2px;color:#cccccc;">CC -[M] <span style="letter-spacing:2.66px">正在构建</span>... and.o</div>
<div class="a" style="left:555.3px;top:812.98px;font-family:'Liberation Mono',monospace;font-size:13.2px;line-height:13.2px;color:#cccccc;">CC -[M] <span style="letter-spacing:2.66px">正在构建</span>... addi.o</div>
<div class="a" style="left:555.3px;top:828.83px;font-family:'Liberation Mono',monospace;font-size:13.2px;line-height:13.2px;color:#cccccc;">CC -[M] <span style="letter-spacing:2.66px">正在构建</span>... slti.o</div>
<div class="a" style="left:555.3px;top:844.68px;font-family:'Liberation Mono',monospace;font-size:13.2px;line-height:13.2px;color:#cccccc;">CC -[M] <span style="letter-spacing:2.66px">正在构建</span>... main.o</div>
<div class="a" style="left:555.3px;top:876.38px;font-family:'Liberation Mono',monospace;font-size:13.2px;line-height:13.2px;color:#cccccc;font-weight:bold;"><span style="letter-spacing:2.66px">终端将被任务重用，按任意键关闭。</span></div>
<div class="a" style="left:555.3px;top:908.08px;font-family:'Liberation Mono',monospace;font-size:13.2px;line-height:13.2px;color:#cccccc;font-weight:bold;">&gt; Executing task: echo Starting RISCV-QEMU&amp;qemu-riscv32 -g 1234 ./*.elf &lt;</div>
<div class="a" style="left:555.3px;top:939.78px;font-family:'Liberation Mono',monospace;font-size:13.2px;line-height:13.2px;color:#cccccc;">Starting RISCV-QEMU</div>
<div class="a" style="left:555.3px;top:955.63px;font-family:'Liberation Mono',monospace;font-size:13.2px;line-height:13.2px;color:#cccccc;">This result is:f0f0</div>
<svg style="left:1824px;top:716px;" width="13" height="13" viewBox="0 0 13 13"><path d="M6.5 0v13M0 6.5h13" stroke="#c5c5c5" stroke-width="1.2"/></svg>
<svg style="left:1842px;top:720px;" width="10" height="6" viewBox="0 0 10 6"><path d="M1 1l4 4 4-4" fill="none" stroke="#c5c5c5" stroke-width="1.1"/></svg>
<svg style="left:1864px;top:718px;" width="11" height="7" viewBox="0 0 11 7"><path d="M1 6l4.5-4.5L10 6" fill="none" stroke="#c5c5c5" stroke-width="1.3"/></svg>
<svg style="left:1886px;top:717px;" width="10" height="10" viewBox="0 0 10 10"><path d="M1 1l8.5 8.5M9.5 1l-8.5 8.5" stroke="#c5c5c5" stroke-width="1.3"/></svg>
<div class="a" style="left:1710px;top:736px;width:1px;height:250px;background:#3c3c3c;"></div>
<svg style="left:1721.5px;top:743.5px;" width="15" height="15" viewBox="0 0 15 15"><g fill="none" stroke="#c5c5c5" stroke-width="1.2"><path d="M0.6 0.6h13.4v13.4h-13.4z"/><path d="M4.5 4l3.5 3.5-3.5 3.5"/></g></svg>
<div class="a" style="left:1740.50px;top:744.00px;font-size:13px;line-height:13px;color:#cccccc;font-family:'Liberation Sans',sans-serif;">bash</div>
<div class="a" style="left:1711px;top:761px;width:199px;height:22px;background:#37373d;"></div>
<svg style="left:1721.5px;top:764.5px;" width="16" height="16" viewBox="0 0 16 16"><g transform="scale(0.9)" fill="none" stroke="#c5c5c5" stroke-linecap="round"><path d="M2.2 13.8L9.4 6.6" stroke-width="2.2"/><path d="M8.6 5.2a3.4 3.4 0 0 1 4.6-4l-2 2 .3 1.9 1.9.3 2-2a3.4 3.4 0 0 1-4 4.6" stroke-width="1.6"/><path d="M1.8 1.8l5.6 5.6" stroke-width="1.6"/><path d="M8.8 8.8l5 5" stroke-width="2.6"/></g></svg>
<div class="a" style="left:1740.50px;top:766.67px;font-size:12.2px;line-height:12.2px;color:#cccccc;font-family:'Liberation Sans',sans-serif;">Run RISCV-QEMU</div>
<div class="a" style="left:1849.00px;top:767.52px;font-size:11.2px;line-height:11.2px;color:#9d9d9d;font-family:'Liberation Sans',sans-serif;">Task</div>
<svg style="left:1886px;top:765px;" width="13" height="12" viewBox="0 0 13 12"><path d="M1 6.5l3.5 4L12 1" fill="none" stroke="#c5c5c5" stroke-width="1.2"/></svg>
<svg style="left:21.5px;top:991px;" width="11" height="12" viewBox="0 0 11 12"><g fill="none" stroke="#ffffff" stroke-width="1.3"><path d="M1 5.5l3.5 3.5L1 12.5M10.5 0.5L7 4l3.5 3.5"/></g></svg>
<svg style="left:51px;top:991.5px;" width="13" height="13" viewBox="0 0 13 13"><g fill="none" stroke="#ffffff" stroke-width="1.1"><circle cx="6.5" cy="6.5" r="5.8"/><path d="M4 4l5 5M9 4l-5 5"/></g></svg>
<div class="a" style="left:68.00px;top:991.64px;font-size:12px;line-height:12px;color:#ffffff;font-family:'Liberation Sans',sans-serif;">0</div>
<svg style="left:77.5px;top:991.5px;" width="13" height="12" viewBox="0 0 13 12"><path d="M6.5 0.8L12.3 11.3H0.7z M6.5 4.5v3.5M6.5 9v1" fill="none" stroke="#ffffff" stroke-width="1.1"/></svg>
<div class="a" style="left:94.00px;top:991.64px;font-size:12px;line-height:12px;color:#ffffff;font-family:'Liberation Sans',sans-serif;">0</div>
<svg style="left:116.5px;top:991.2px;" width="16" height="16" viewBox="0 0 16 16"><g transform="scale(0.8)" fill="none" stroke="#ffffff" stroke-linecap="round"><path d="M2.2 13.8L9.4 6.6" stroke-width="2.2"/><path d="M8.6 5.2a3.4 3.4 0 0 1 4.6-4l-2 2 .3 1.9 1.9.3 2-2a3.4 3.4 0 0 1-4 4.6" stroke-width="1.6"/><path d="M1.8 1.8l5.6 5.6" stroke-width="1.6"/><path d="M8.8 8.8l5 5" stroke-width="2.6"/></g></svg>
<div class="a" style="left:133.00px;top:991.64px;font-size:12px;line-height:12px;color:#ffffff;font-family:'Liberation Sans',sans-serif;">1</div>
<svg style="left:154px;top:991px;" width="14" height="13" viewBox="0 0 14 13"><g fill="none" stroke="#ffffff" stroke-width="1.2"><path d="M5 1.5v5M5 1.5l8 4.5-4 2.5"/><rect x="1.5" y="8" width="4.5" height="4.5" rx="1"/></g></svg>
<div class="a" style="left:171.80px;top:991.64px;font-size:12px;line-height:12px;color:#ffffff;font-family:'Liberation Sans',sans-serif;">(gdb) 启动 (16)</div>
<svg style="left:1510.5px;top:990.5px;" width="10" height="13" viewBox="0 0 10 13"><path d="M5 0.8c0 3-4 4.5-4 8a4 4 0 0 0 8 0c0-1.8-1-3-2-4c0 1.5-.5 2.3-1.5 2.5c1-2 .5-4.5-.5-6.5z" fill="none" stroke="#ffffff" stroke-width="1.1"/></svg>
<div class="a" style="left:1537.40px;top:991.64px;font-size:12px;line-height:12px;color:#ffffff;font-family:'Liberation Sans',sans-serif;">行 20，列 1</div>
<div class="a" style="left:1614.00px;top:991.64px;font-size:12px;line-height:12px;color:#ffffff;font-family:'Liberation Sans',sans-serif;">空格: 4</div>
<div class="a" style="left:1666.60px;top:991.64px;font-size:12px;line-height:12px;color:#ffffff;font-family:'Liberation Sans',sans-serif;">UTF-8</div>
<div class="a" style="left:1714.60px;top:991.64px;font-size:12px;line-height:12px;color:#ffffff;font-family:'Liberation Sans',sans-serif;">LF</div>
<div class="a" style="left:1744.50px;top:992.15px;font-size:11.4px;line-height:11.4px;color:#ffffff;font-family:'Liberation Sans',sans-serif;">RISC-V Assembly</div>
<svg style="left:1852px;top:991px;" width="14" height="13" viewBox="0 0 14 13"><g fill="none" stroke="#ffffff" stroke-width="1.1"><path d="M1 12.5l3-5.5M6.5 1.5h6v5h-6zM4 7.5h2.5l-3 5"/></g></svg>
<svg style="left:1881.5px;top:990.5px;" width="14" height="14" viewBox="0 0 14 14"><g fill="none" stroke="#ffffff" stroke-width="1.2"><path d="M2 11h9.5M3 11V6a3.8 3.8 0 0 1 5-3.6M10.5 7v4M5.5 13h2.5"/></g><circle cx="10.8" cy="3.2" r="2.5" fill="#ffffff"/></svg>
</body></html>
